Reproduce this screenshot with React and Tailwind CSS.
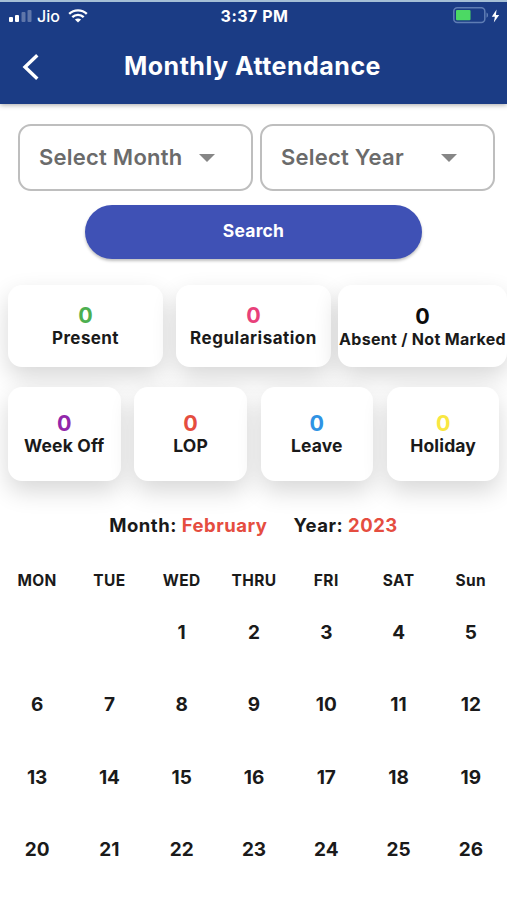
const topStats = [
  { label: 'Present', value: 0, color: 'text-[#4CAF50]', box: 'ml-2 w-[155px]', text: 'text-[17px] tracking-[0.4px]' },
  { label: 'Regularisation', value: 0, color: 'text-[#E8407A]', box: 'ml-[13px] w-[155px]', text: 'text-[17px] tracking-[0.5px]' },
  { label: 'Absent / Not Marked', value: 0, color: 'text-[#0c0c0c]', box: 'ml-[7px] w-[169px] pt-px', text: 'text-[16px] tracking-[0.3px]' },
];

const bottomStats = [
  { label: 'Week Off', value: 0, color: 'text-[#9227AA]' },
  { label: 'LOP', value: 0, color: 'text-[#E54D40]' },
  { label: 'Leave', value: 0, color: 'text-[#2F93E4]' },
  { label: 'Holiday', value: 0, color: 'text-[#F9E742]' },
];

const weekDays = ['MON', 'TUE', 'WED', 'THRU', 'FRI', 'SAT', 'Sun'];

// February 2023 starts on a Wednesday
const days = [null, null, ...Array.from({ length: 26 }, (_, i) => i + 1)];

function StatusBar() {
  return (
    <div className="grid h-[27px] grid-cols-[1fr_auto_1fr] items-center pl-[9px] pr-[7px]">
      <div className="flex items-center">
        <svg width="23" height="14" viewBox="0 0 23 14" fill="#fff">
          <rect x="0" y="8" width="4" height="5" rx="1" />
          <rect x="6" y="6" width="4" height="7" rx="1" />
          <rect x="12.5" y="3" width="4" height="10" rx="1" opacity="0.3" />
          <rect x="18.5" y="1" width="4" height="12" rx="1" opacity="0.3" />
        </svg>
        <span className="ml-[5px] text-[16px] font-medium leading-none">Jio</span>
        <svg className="ml-[8px]" width="20" height="14" viewBox="0 0 20 14" fill="none" stroke="#fff" strokeWidth="2.4">
          <path d="M1.2 4.8C6 0.2 14 0.2 18.8 4.8" />
          <path d="M4.3 8.1C7.5 5.1 12.5 5.1 15.7 8.1" />
          <path d="M10 13.6L6.9 10.6C8.7 9 11.3 9 13.1 10.6Z" fill="#fff" stroke="none" />
        </svg>
      </div>
      <span className="text-[16px] font-bold leading-none tracking-[0.5px]">3:37 PM</span>
      <div className="flex items-center justify-end">
        <svg width="36" height="17" viewBox="0 0 36 17">
          <rect x="0.8" y="0.8" width="31" height="14.6" rx="3.5" fill="none" stroke="#5f7db4" strokeWidth="1.5" />
          <rect x="3" y="3" width="14.5" height="10.2" rx="1" fill="#4CD964" />
          <path d="M33.5 5.5C35.6 6.4 35.6 9.8 33.5 10.7Z" fill="#5f7db4" />
        </svg>
        <svg className="ml-[2px]" width="9" height="14" viewBox="0 0 9 14" fill="#fff">
          <path d="M5.6 0.5L0.8 7.8H3.9L2.8 13.5L8.2 5.9H4.9Z" />
        </svg>
      </div>
    </div>
  );
}

function Header() {
  return (
    <header className="relative h-[104px] border-t-2 border-[#A5BFD6] bg-[#1B3C85] text-white shadow-[0_1px_5px_rgba(0,0,0,0.35)]">
      <StatusBar />
      <div className="grid h-[75px] grid-cols-[60px_1fr_62px] items-center">
        <svg className="ml-[22px]" width="18" height="28" viewBox="0 0 18 28" fill="none" stroke="#fff" strokeWidth="3.4">
          <path d="M15.3 2.2L3 14L15.3 25.8" />
        </svg>
        <h1 className="whitespace-nowrap text-center text-[25px] font-bold tracking-[0.5px]">Monthly Attendance</h1>
      </div>
    </header>
  );
}

function Select({ label }) {
  return (
    <button className="flex h-[67px] w-[235px] items-center rounded-[13px] border-2 border-[#BEBEBE] bg-white pl-[18.5px] text-left">
      <span className="w-[160px] text-[22px] font-semibold tracking-[0.25px] text-[#6B6B6B]">{label}</span>
      <svg width="16" height="8" viewBox="0 0 16 8" fill="#868686">
        <path d="M0 0H16L8 8Z" />
      </svg>
    </button>
  );
}

function StatCard({ value, label, color, box, text }) {
  return (
    <div className={`flex flex-col items-center justify-center rounded-[14px] bg-white ${box}`}>
      <span className={`text-[21.5px] font-bold leading-[24px] ${color}`}>{value}</span>
      <span className={`whitespace-nowrap font-bold leading-[22px] text-[#1a1a1a] ${text}`}>{label}</span>
    </div>
  );
}

export default function App() {
  return (
    <div className="h-[900px] w-[507px] overflow-hidden bg-white font-[Inter,sans-serif] text-[#1a1a1a]">
      <Header />

      <div className="mt-5 flex gap-[7px] pl-[18.4px]">
        <Select label="Select Month" />
        <Select label="Select Year" />
      </div>

      <button className="mx-auto mt-[14px] block h-[54px] w-[337px] rounded-full bg-[#3F51B5] pb-px text-[17.5px] font-bold tracking-[0.2px] text-white shadow-[0_2px_3px_rgba(0,0,0,0.25)]">
        Search
      </button>

      <section className="mt-[26px] flex h-[82px]">
        {topStats.map((stat) => (
          <StatCard key={stat.label} {...stat} box={`${stat.box} shrink-0 shadow-[0_10px_24px_rgba(0,0,0,0.16)]`} />
        ))}
      </section>

      <section className="relative mt-5 flex h-[94px] gap-[13.8px] pl-2">
        {bottomStats.map((stat) => (
          <StatCard
            key={stat.label}
            {...stat}
            box="w-[112.5px] shrink-0 shadow-[0_10px_24px_rgba(0,0,0,0.16)]"
            text="text-[17.5px] tracking-[0.15px]"
          />
        ))}
      </section>

      <div className="mt-[33px] flex h-6 items-center justify-center gap-[26px] text-[18.5px] font-bold tracking-[0.5px]">
        <p>
          Month: <span className="text-[#E54D40]">February</span>
        </p>
        <p>
          Year: <span className="text-[#E54D40]">2023</span>
        </p>
      </div>

      <div className="mt-[26px] grid w-[507px] grid-cols-7 pl-px text-center">
        {weekDays.map((day) => (
          <span key={day} className="h-[33px] text-[15.5px] font-bold leading-[34px] tracking-[0.4px]">
            {day}
          </span>
        ))}
        {days.map((day, i) => (
          <span key={i} className="h-[72.3px] text-[19px] font-bold leading-[72px]">
            {day}
          </span>
        ))}
      </div>
    </div>
  );
}
